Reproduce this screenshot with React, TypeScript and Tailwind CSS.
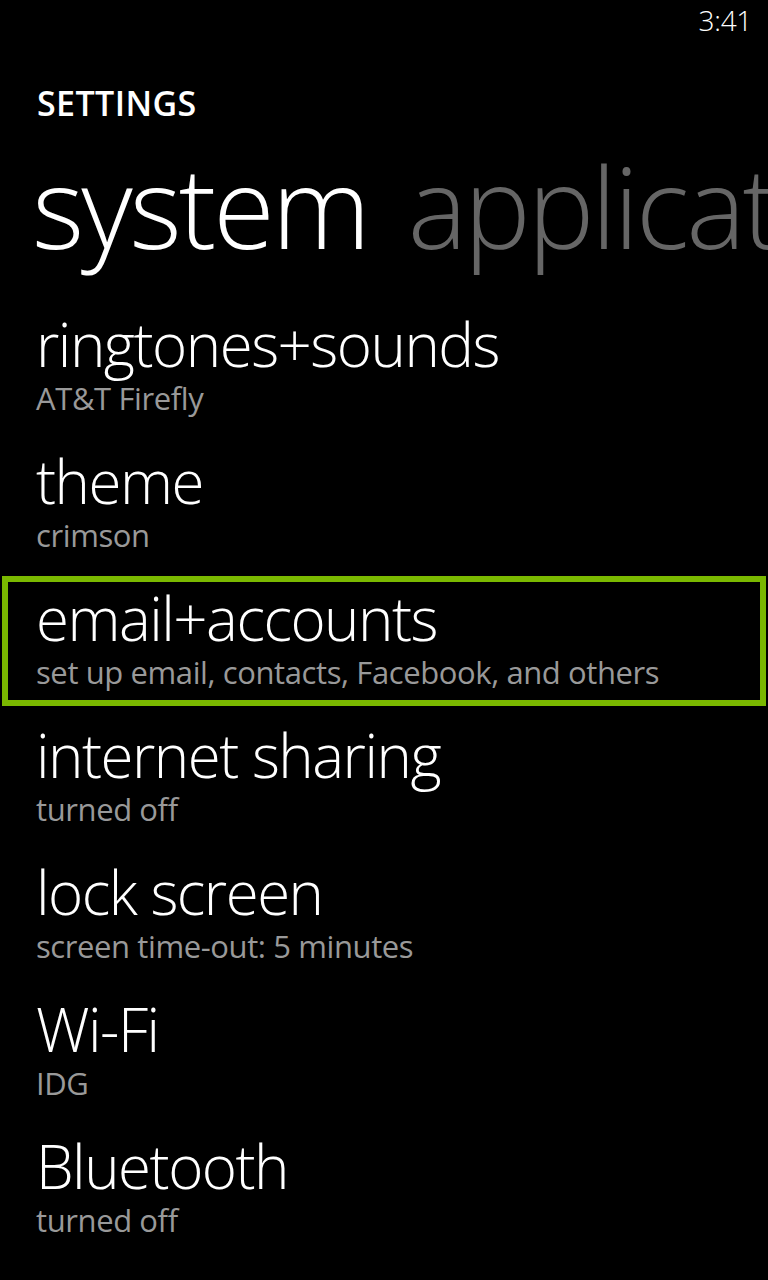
const ITEMS = [
  { title: "ringtones+sounds", sub: "AT&T Firefly" },
  { title: "theme", sub: "crimson" },
  { title: "email+accounts", sub: "set up email, contacts, Facebook, and others", selected: true },
  { title: "internet sharing", sub: "turned off" },
  { title: "lock screen", sub: "screen time-out: 5 minutes" },
  { title: "Wi-Fi", sub: "IDG" },
  { title: "Bluetooth", sub: "turned off" },
]

export default function App() {
  return (
    <div
      className="w-[768px] h-[1280px] bg-black text-white overflow-hidden flex flex-col"
      style={{ fontFamily: '"Open Sans", "Noto Sans", sans-serif' }}
    >
      {/* status bar */}
      <div className="flex justify-end pr-[16px] pt-[6px] h-[48px]">
        <span className="text-[28px] font-light leading-none tracking-[-0.3px]">3:41</span>
      </div>

      {/* title */}
      <div className="pl-[37px] pt-[38px] h-[72px] text-[34px] font-semibold leading-none tracking-[0.4px]">
        SETTINGS
      </div>

      {/* pivot headers */}
      <div className="flex gap-[40px] pl-[32px] pt-[26px] whitespace-nowrap text-[112px] font-light leading-[120px] tracking-[-3px]">
        <span>system</span>
        <span className="text-[#666666]">applications</span>
      </div>

      {/* list */}
      <div className="flex flex-col pt-[36px]">
        {ITEMS.map((it) => (
          <div
            key={it.title}
            className={`h-[130px] mb-[7px] mx-[2px] pl-[28px] border-[6px] ${
              it.selected ? "border-[#7ab800]" : "border-transparent"
            }`}
          >
            <div className="text-[60px] font-light leading-[72px] tracking-[-1.5px] whitespace-nowrap">{it.title}</div>
            <div className="text-[31px] leading-[36px] text-[#999999] tracking-[-0.4px] whitespace-nowrap">{it.sub}</div>
          </div>
        ))}
      </div>
    </div>
  )
}
